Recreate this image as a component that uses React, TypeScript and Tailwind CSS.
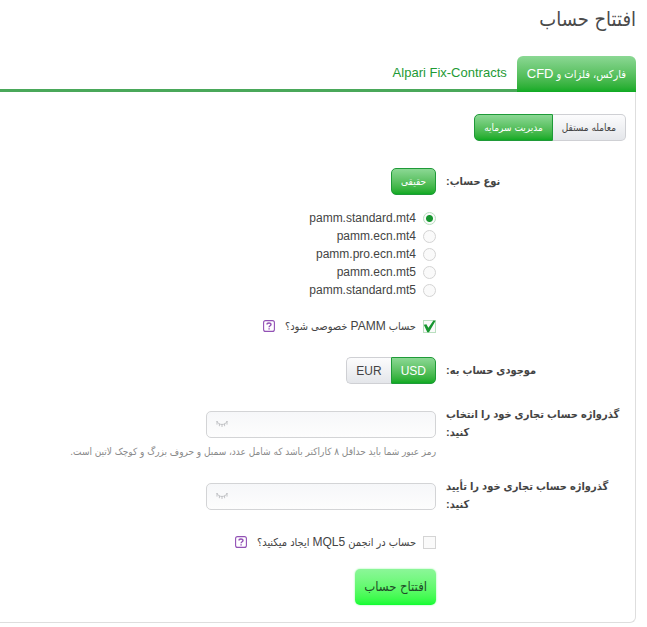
import { useState } from "react";
import type { ReactNode } from "react";

const accountTypes = [
  "pamm.standard.mt4",
  "pamm.ecn.mt4",
  "pamm.pro.ecn.mt4",
  "pamm.ecn.mt5",
  "pamm.standard.mt5",
];

const green = "border-[#1f9a38] bg-linear-to-b from-[#8bd894] to-[#0caa22] text-white";
const gray = "border-[#cfd0d4] bg-linear-to-b from-[#fcfcfd] to-[#e4e6ea] text-[#444]";

function Row({ label, children }: { label?: ReactNode; children: ReactNode }) {
  return (
    <div className="flex gap-[10px]">
      <div className="w-[180px] shrink-0 pt-1 text-left text-[11px] font-bold leading-[18px] text-[#444]">{label}</div>
      <div className="min-w-0 flex-1">{children}</div>
    </div>
  );
}

function Check({ id, defaultChecked, children }: { id: string; defaultChecked?: boolean; children: ReactNode }) {
  return (
    <div className="flex h-[18px] items-center">
      <span className="relative flex">
        <input
          id={id}
          type="checkbox"
          defaultChecked={defaultChecked}
          className="peer size-[13px] appearance-none border border-[#d4d4d4] bg-[#fafafa] checked:border-[#b9dfbf]"
        />
        <svg viewBox="0 0 13 13" className="pointer-events-none absolute inset-0 hidden size-[13px] peer-checked:block">
          <path d="M0.8 4.8 L3.4 4.2 L5.4 7.8 L10.4 0.4 L12.6 0.8 L6 12.2 L4.3 12.2 Z" fill="#16962f" />
        </svg>
      </span>
      <label htmlFor={id} className="mr-[7px] text-[11px] text-[#444]">{children}</label>
      <button type="button" aria-label="راهنما" className="mr-[10px] flex">
        <svg viewBox="0 0 12 12" className="size-3" fill="none" stroke="#9251b5">
          <rect x="0.6" y="0.6" width="10.8" height="10.8" rx="2" strokeWidth="1.1" />
          <path d="M4 4.6 C4 2.4 8 2.4 8 4.5 C8 5.8 6.1 5.7 6.1 7.3" strokeWidth="1.4" />
          <path d="M6.1 8.2 V9.5" strokeWidth="1.4" />
        </svg>
      </button>
    </div>
  );
}

function Password({ id }: { id: string }) {
  return (
    <div className="relative w-[230px]">
      <input
        id={id}
        type="password"
        className="block h-[27px] w-full rounded-[5px] border border-[#d3d4d6] bg-linear-to-b from-[#f6f7f9] to-[#fdfdfd] pr-2 pl-8 text-[12px] outline-none"
      />
      <svg viewBox="0 0 12 8" className="pointer-events-none absolute left-[10px] top-[9px] h-2 w-3" fill="none" stroke="#b4b5b9" strokeWidth="0.8">
        <path d="M0.8 1 C2.5 5.6 9.5 5.6 11.2 1 M1 1 V4.6 M3.4 3.8 V6.2 M6 4.6 V7 M8.6 3.8 V6.2 M11 1 V4.6" />
      </svg>
    </div>
  );
}

export default function App() {
  const [type, setType] = useState(accountTypes[0]);
  const [currency, setCurrency] = useState("USD");

  return (
    <div
      dir="rtl"
      className="min-h-screen bg-white pr-[11px] pb-1 font-['Liberation_Sans','DejaVu_Sans_Condensed','DejaVu_Sans',sans-serif] text-[12px] text-[#444]"
    >
      <h1 className="h-14 pt-[3px] text-[20px] leading-8 text-[#4a4a4a]">افتتاح حساب</h1>

      {/* Tabs */}
      <nav className="flex items-end border-b-[3px] border-[#4aa85a]">
        <a href="#cfd" className="-mb-[3px] flex h-9 items-center rounded-t-[6px] bg-linear-to-b from-[#8bd894] to-[#0caa22] px-[10px] text-[11px] text-white">
          <span>فارکس، فلزات و <span className="text-[13px]">CFD</span></span>
        </a>
        <a href="#fix" className="flex h-[33px] items-center px-[10px] text-[13px] text-[#1e9a35]">
          Alpari Fix-Contracts
        </a>
      </nav>

      <form onSubmit={(e) => e.preventDefault()} className="rounded-br-[6px] border-r border-b border-[#dedede] pt-[22px] pr-[9px] pb-[17px]">
        <div className="flex">
          <button type="button" className={`h-[27px] rounded-r-[5px] border border-l-0 px-[9px] text-[10px] ${gray}`}>
            معامله مستقل
          </button>
          <button type="button" className={`h-[27px] rounded-l-[5px] border px-[9px] text-[10px] ${green}`}>
            مدیریت سرمایه
          </button>
        </div>

        <div className="mt-[27px]">
          <Row label="نوع حساب:">
            <button type="button" className={`block h-[27px] rounded-[5px] border px-[9px] text-[10px] ${green}`}>
              حقیقی
            </button>
            <div className="mt-[14px]">
              {accountTypes.map((name) => (
                <label key={name} className="flex h-[18px] items-center gap-[7px]">
                  <input
                    type="radio"
                    name="accountType"
                    checked={type === name}
                    onChange={() => setType(name)}
                    className="size-[13px] appearance-none rounded-full border border-[#d4d4d4] bg-[#fafafa] checked:border-[#b9dfbf] checked:bg-[radial-gradient(circle,#16962f_3px,#fafafa_4px)]"
                  />
                  <span dir="ltr">{name}</span>
                </label>
              ))}
            </div>
            <div className="mt-[18px]">
              <Check id="private" defaultChecked>حساب <span className="text-[12px]">PAMM</span> خصوصی شود؟</Check>
            </div>
          </Row>
        </div>

        <div className="mt-[22px]">
          <Row label="موجودی حساب به:">
            <div className="flex">
              <button type="button" onClick={() => setCurrency("USD")} className={`h-[27px] rounded-r-[5px] border px-[9px] ${currency === "USD" ? green : gray}`}>
                USD
              </button>
              <button type="button" onClick={() => setCurrency("EUR")} className={`h-[27px] rounded-l-[5px] border border-r-0 px-[9px] ${currency === "EUR" ? green : gray}`}>
                EUR
              </button>
            </div>
          </Row>
        </div>

        <div className="mt-[17px]">
          <Row label={<label htmlFor="password">گذرواژه حساب تجاری خود را انتخاب<br />کنید:</label>}>
            <div className="pt-[10px]">
              <Password id="password" />
              <p className="mt-[5px] text-[10px] leading-[18px] text-[#8a8a8a]">
                رمز عبور شما باید حداقل ۸ کاراکتر باشد که شامل عدد، سمبل و حروف بزرگ و کوچک لاتین است.
              </p>
            </div>
          </Row>
        </div>

        <div className="mt-[12px]">
          <Row label={<label htmlFor="confirm">گذرواژه حساب تجاری خود را تأیید<br />کنید:</label>}>
            <div className="pt-[10px]">
              <Password id="confirm" />
            </div>
            <div className="mt-[23px]">
              <Check id="mql5">حساب در انجمن <span className="text-[12px]">MQL5</span> ایجاد میکنید؟</Check>
            </div>
            <button type="submit" className="mt-[18px] block h-9 rounded-[5px] bg-linear-to-b from-[#8bf698] to-[#0dfc31] px-[9px] text-[13px] text-[#1f4a28] shadow-[0_0_2px_#8bf698]">
              افتتاح حساب
            </button>
          </Row>
        </div>
      </form>
    </div>
  );
}
